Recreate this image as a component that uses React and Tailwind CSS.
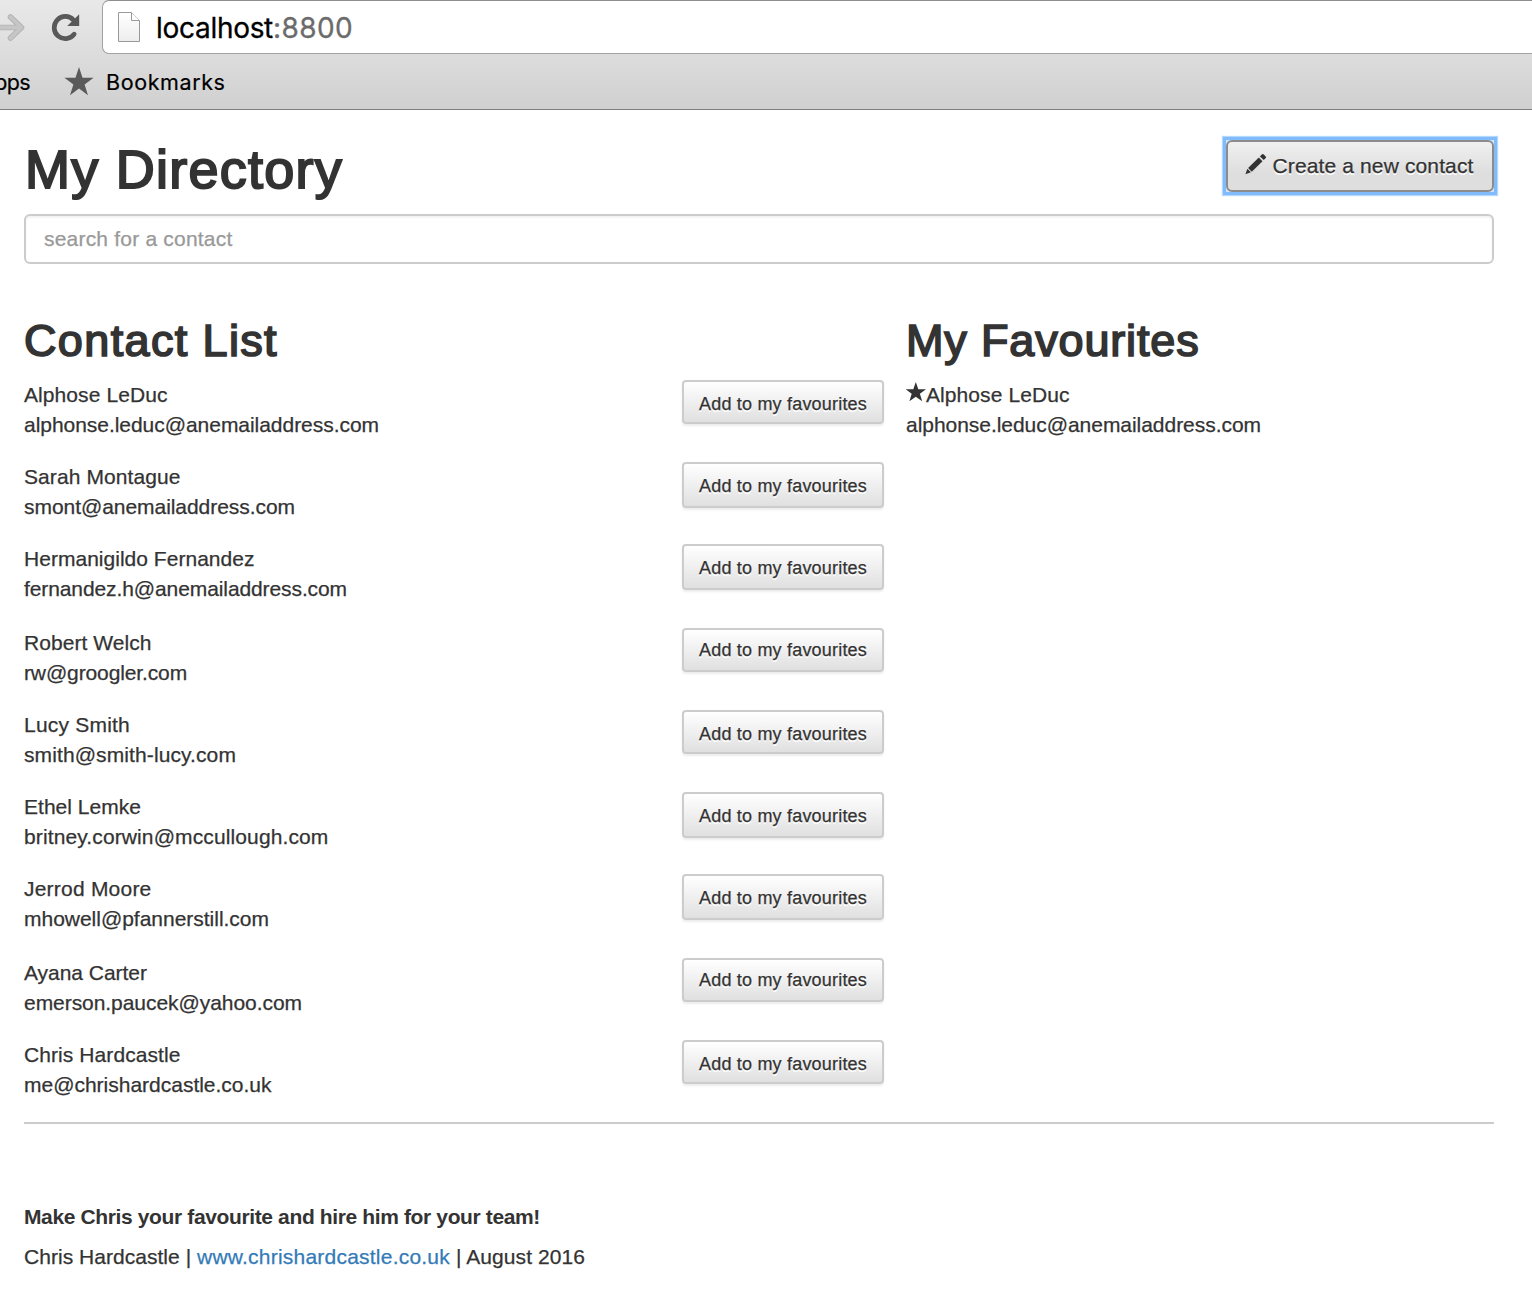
import { useLayoutEffect, useRef } from "react";

const contacts = [
  { name: "Alphose LeDuc", nw: 143.5, email: "alphonse.leduc@anemailaddress.com", ew: 355, row: "h-[82px]", btn: "h-[44px] pt-[9px]" },
  { name: "Sarah Montague", nw: 156.5, email: "smont@anemailaddress.com", ew: 271, row: "h-[82px]", btn: "h-[46px] pt-[9px]" },
  { name: "Hermanigildo Fernandez", nw: 230.5, email: "fernandez.h@anemailaddress.com", ew: 323, row: "h-[84px]", btn: "h-[46px] pt-[9px]" },
  { name: "Robert Welch", nw: 127.5, email: "rw@groogler.com", ew: 163, row: "h-[82px]", btn: "h-[44px] pt-[7px]" },
  { name: "Lucy Smith", nw: 106, email: "smith@smith-lucy.com", ew: 212, row: "h-[82px]", btn: "h-[44px] pt-[9px]" },
  { name: "Ethel Lemke", nw: 117, email: "britney.corwin@mccullough.com", ew: 304.5, row: "h-[82px]", btn: "h-[46px] pt-[9px]" },
  { name: "Jerrod Moore", nw: 127.5, email: "mhowell@pfannerstill.com", ew: 245, row: "h-[84px]", btn: "h-[46px] pt-[9px]" },
  { name: "Ayana Carter", nw: 123, email: "emerson.paucek@yahoo.com", ew: 278, row: "h-[82px]", btn: "h-[44px] pt-[7px]" },
  { name: "Chris Hardcastle", nw: 156.5, email: "me@chrishardcastle.co.uk", ew: 247.5, row: "h-[82px]", btn: "h-[44px] pt-[9px]" },
];

// Adjusts letter spacing so that the text sets to the given width.
function Fit({ w, className = "", children }) {
  const ref = useRef(null);
  useLayoutEffect(() => {
    const el = ref.current;
    el.style.letterSpacing = "0px";
    const natural = el.getBoundingClientRect().width;
    el.style.letterSpacing = `${(w - natural) / el.textContent.length}px`;
  }, [w]);
  return (
    <span ref={ref} className={`inline-block whitespace-pre ${className}`}>
      {children}
    </span>
  );
}

function BrowserBar() {
  return (
    <header className="h-[110px] overflow-hidden border-b border-[#7d7d7d] bg-linear-to-b from-[#e9e9e9] to-[#d0d0d0] font-[Inter,sans-serif] text-black">
      <div className="flex h-[54px] items-start">
        <svg className="h-[54px] w-[102px] shrink-0" viewBox="0 0 102 54" fill="none">
          <path d="M-4 27.5H20M10.5 17L21.5 27.5L10.5 38" stroke="#b3b3b3" strokeWidth="5.6" strokeLinecap="round" strokeLinejoin="round" />
          <path d="M-4 27.5H20M10.5 17L21.5 27.5L10.5 38" stroke="#c6c6c6" strokeWidth="3.8" strokeLinecap="round" strokeLinejoin="round" />
          <path d="M73.6 20.2A11.1 11.1 0 1 0 74.2 34.2" stroke="#595959" strokeWidth="4.7" strokeLinecap="round" />
          <path d="M79.2 14.2V26H67.2Z" fill="#595959" />
        </svg>
        <div className="flex h-[54px] flex-1 items-center rounded-l-[7px] border border-r-0 border-[#a2a2a2] border-t-[#8e8e8e] bg-white pl-[14px]">
          <svg className="h-[32px] w-[24px] shrink-0" viewBox="0 0 24 32" fill="none">
            <defs>
              <linearGradient id="sheet" x1="0" y1="0" x2="0" y2="1">
                <stop offset="0" stopColor="#fff" />
                <stop offset="1" stopColor="#ededed" />
              </linearGradient>
            </defs>
            <path d="M1.5 1.5H14.5L22.5 9.5V30.5H1.5Z" fill="url(#sheet)" stroke="#999" />
            <path d="M14.5 1.5V9.5H22.5" fill="#fff" stroke="#999" />
          </svg>
          <div className="ml-[15px] flex pt-[2px] text-[28px] leading-[54px] [-webkit-text-stroke-width:0.3px]">
            <Fit w={117}>localhost</Fit>
            <Fit w={80} className="text-[#6b6b6b]">:8800</Fit>
          </div>
        </div>
      </div>
      <div className="flex h-[56px] items-center text-[21.5px] leading-[56px] [-webkit-text-stroke-width:0.2px]">
        <div className="flex w-[30px] justify-end overflow-hidden">
          <Fit w={50}>Apps</Fit>
        </div>
        <svg className="ml-[34px] h-[30px] w-[30px]" viewBox="0 0 30 30">
          <path d="M15 0L18.5 10.8H29.6L20.6 17.4L24 28.2L15 21.6L6 28.2L9.4 17.4L.4 10.8H11.5Z" fill="#5a5a5a" />
        </svg>
        <Fit w={119.5} className="ml-[12px]">Bookmarks</Fit>
      </div>
    </header>
  );
}

function ContactText({ c, starred }) {
  return (
    <div>
      <div className="flex h-[30px]">
        {starred && (
          <svg className="mt-[2px] h-[20px] w-[20px]" viewBox="0 0 20 20">
            <path d="M9.8 0L12.3 7.3H20L13.9 11.8L16.2 19.2L9.8 14.7L3.4 19.2L5.7 11.8L-.4 7.3H7.3Z" fill="#333" />
          </svg>
        )}
        <Fit w={c.nw}>{c.name}</Fit>
      </div>
      <div className="h-[30px]">
        <Fit w={c.ew}>{c.email}</Fit>
      </div>
    </div>
  );
}

export default function App() {
  return (
    <div className="h-[1296px] w-[1532px] overflow-hidden bg-white font-['Liberation_Sans',Arial,sans-serif] text-[21px] leading-[30px] text-[#333]">
      <BrowserBar />
      <main className="pr-[38px] pl-[24px] [-webkit-text-stroke-width:0.25px]">
        <div className="flex h-[104px] items-start justify-between pt-[30px]">
          <h1 className="pl-[1px] text-[54px] leading-[59px] [-webkit-text-stroke-width:2px]">
            <Fit w={318}>My Directory</Fit>
          </h1>
          <div className="bg-[#cfe5fd] shadow-[0_0_0_3px_#80bcfc,0_0_1px_4px_#b4d8fe]">
            <button className="flex h-[52px] w-[268px] items-start rounded-[6px] border-2 border-[#8c8c8c] bg-linear-to-b from-[#f0f0f0] to-[#dedede] to-65% pt-[9px] pl-[17px] [text-shadow:0_2px_0_#fff]">
              <svg className="mt-[2px] h-[23px] w-[23px] shrink-0" viewBox="0 0 23 23" fill="#333">
                <path d="M0.4 21.2L2.4 15.8L5.9 19.3Z" />
                <path d="M3.1 15L13.8 4.5L17.5 8.2L6.8 18.7Z" />
                <path d="M14.9 3.4L16.8 1.5Q17.8 .6 18.8 1.5L20.7 3.4Q21.5 4.3 20.6 5.2L18.7 7.1Z" />
              </svg>
              <Fit w={201} className="ml-[4.5px]">Create a new contact</Fit>
            </button>
          </div>
        </div>
        <input
          className="block h-[50px] w-full rounded-[6px] border-2 border-[#ccc] px-[18px] tracking-[0.2px] shadow-[inset_0_2px_2px_rgba(0,0,0,0.05)] placeholder:text-[#999]"
          placeholder="search for a contact"
        />
        <div className="mt-[51px] flex">
          <section className="w-[882px]">
            <h2 className="mb-[15px] h-[50px] pt-[1px] text-[45px] leading-[50px] [-webkit-text-stroke-width:1.7px]">
              <Fit w={254}>Contact List</Fit>
            </h2>
            {contacts.map((c) => (
              <div key={c.email} className={`flex items-start ${c.row}`}>
                <div className="w-[658px]">
                  <ContactText c={c} />
                </div>
                <button
                  className={`flex w-[202px] items-start justify-center rounded-[4px] border-2 border-[#ccc] bg-linear-to-b from-white to-[#e0e0e0] text-[18px] leading-[27px] shadow-[0_2px_2px_rgba(0,0,0,0.075)] [text-shadow:0_2px_0_#fff] ${c.btn}`}
                >
                  <Fit w={168}>Add to my favourites</Fit>
                </button>
              </div>
            ))}
          </section>
          <section>
            <h2 className="mb-[15px] h-[50px] pt-[1px] text-[45px] leading-[50px] [-webkit-text-stroke-width:1.7px]">
              <Fit w={293.5}>My Favourites</Fit>
            </h2>
            <ContactText c={contacts[0]} starred />
          </section>
        </div>
        <hr className="border-t-2 border-[#ccc]" />
        <footer className="pt-[78px]">
          <p className="mb-[10px] h-[30px] font-bold [-webkit-text-stroke-width:0px]">
            <Fit w={516}>Make Chris your favourite and hire him for your team!</Fit>
          </p>
          <p className="flex h-[30px]">
            <Fit w={173}>{"Chris Hardcastle | "}</Fit>
            <a className="text-[#337ab7]"><Fit w={253}>www.chrishardcastle.co.uk</Fit></a>
            <Fit w={135}>{" | August 2016"}</Fit>
          </p>
        </footer>
      </main>
    </div>
  );
}
